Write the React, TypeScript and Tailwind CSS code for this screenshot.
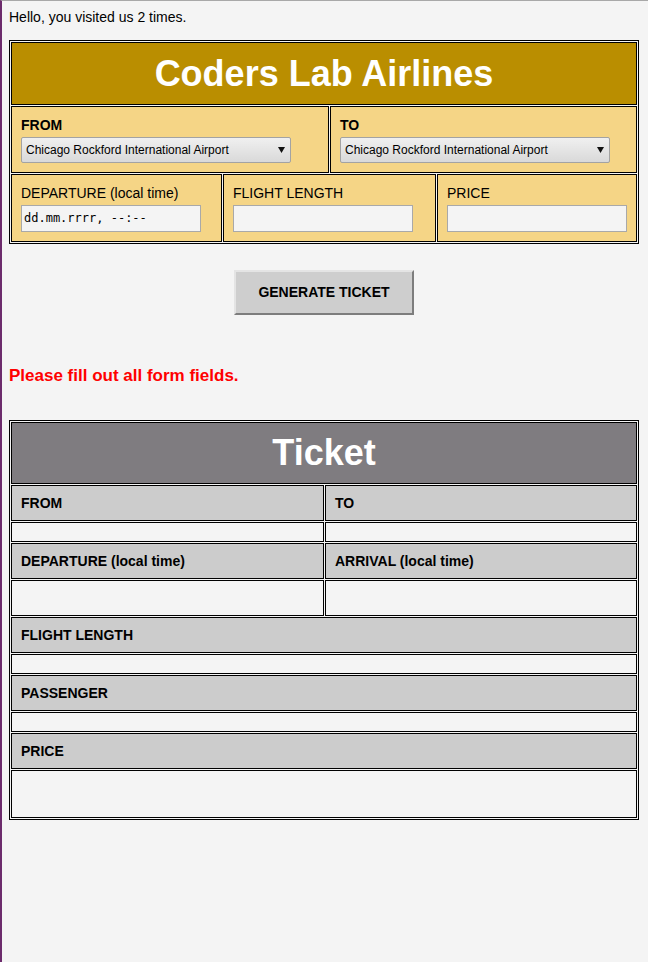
import React from "react";

type Airport = { code: string; name: string };

const airports: Airport[] = [
  { code: "RFD", name: "Chicago Rockford International Airport" },
  { code: "JFK", name: "John F. Kennedy International Airport" },
  { code: "WAW", name: "Warsaw Chopin Airport" },
];

const AirportSelect: React.FC = () => (
  <div className="relative mt-1 w-[270px] h-[26px]">
    <select
      defaultValue="RFD"
      className="appearance-none w-full h-full border border-[#a3a3a3] rounded-[2px] bg-gradient-to-b from-[#f0f0f0] to-[#d9d9d9] pl-[4px] text-[12px] text-black outline-none"
    >
      {airports.map((a) => (
        <option key={a.code} value={a.code}>
          {a.name}
        </option>
      ))}
    </select>
    <svg
      className="absolute right-[6px] top-[10px] pointer-events-none"
      width="7"
      height="6"
      viewBox="0 0 7 6"
    >
      <path d="M0 0h7L3.5 6z" fill="#111" />
    </svg>
  </div>
);

const FieldInput: React.FC<{ value?: string }> = ({ value }) => (
  <input
    type="text"
    defaultValue={value}
    className="mt-1 w-[180px] h-[27px] border border-[#a9a9a9] bg-[#f4f4f4] px-[2px] text-[12px] font-['DejaVu_Sans_Mono',monospace] text-black outline-none"
  />
);

type TicketRow = { cells: string[]; heads: boolean; h: string };

const ticketRows: TicketRow[] = [
  { cells: ["FROM", "TO"], heads: true, h: "h-[36px]" },
  { cells: ["", ""], heads: false, h: "h-[20px]" },
  { cells: ["DEPARTURE (local time)", "ARRIVAL (local time)"], heads: true, h: "h-[36px]" },
  { cells: ["", ""], heads: false, h: "h-[36px]" },
  { cells: ["FLIGHT LENGTH"], heads: true, h: "h-[36px]" },
  { cells: [""], heads: false, h: "h-[20px]" },
  { cells: ["PASSENGER"], heads: true, h: "h-[36px]" },
  { cells: [""], heads: false, h: "h-[20px]" },
  { cells: ["PRICE"], heads: true, h: "h-[36px]" },
  { cells: [""], heads: false, h: "h-[48px]" },
];

export default function App() {
  return (
    <div className="min-h-[962px] bg-[#f4f4f4] border-t border-t-[#a8a8a8] border-l-2 border-l-[#6c2b6c] pl-[7px] pt-[8px] font-['Liberation_Sans',Arial,sans-serif] text-[14px] text-black">
      <p className="leading-4">Hello, you visited us 2 times.</p>

      {/* booking form */}
      <div className="mt-[15px] w-[630px] border border-black p-px flex flex-col gap-px">
        <div className="h-[63px] border border-black bg-[#ba8e00] flex items-center justify-center text-white font-bold text-[36px]">
          Coders Lab Airlines
        </div>
        <div className="flex gap-px h-[67px]">
          <div className="w-[318px] border border-black bg-[#f5d586] pl-[9px] flex flex-col justify-center">
            <span className="font-bold leading-4">FROM</span>
            <AirportSelect />
          </div>
          <div className="flex-1 border border-black bg-[#f5d586] pl-[9px] flex flex-col justify-center">
            <span className="font-bold leading-4">TO</span>
            <AirportSelect />
          </div>
        </div>
        <div className="flex gap-px h-[68px]">
          <div className="w-[211px] border border-black bg-[#f5d586] pl-[9px] flex flex-col justify-center">
            <span className="leading-4">DEPARTURE (local time)</span>
            <FieldInput value="dd.mm.rrrr, --:--" />
          </div>
          <div className="w-[213px] border border-black bg-[#f5d586] pl-[9px] flex flex-col justify-center">
            <span className="leading-4">FLIGHT LENGTH</span>
            <FieldInput />
          </div>
          <div className="flex-1 border border-black bg-[#f5d586] pl-[9px] flex flex-col justify-center">
            <span className="leading-4">PRICE</span>
            <FieldInput />
          </div>
        </div>
      </div>

      <div className="w-[630px] flex justify-center mt-[26px]">
        <button className="w-[180px] h-[45px] bg-[#cecece] border-2 border-t-[#e4e4e4] border-l-[#e4e4e4] border-b-[#7d7d7d] border-r-[#7d7d7d] font-bold text-[14px] text-black">
          GENERATE TICKET
        </button>
      </div>

      <p className="mt-[51px] leading-[20px] text-[17px] font-bold text-[#ff0000]">
        Please fill out all form fields.
      </p>

      {/* ticket */}
      <div className="mt-[34px] w-[630px] border border-black p-px flex flex-col gap-px">
        <div className="h-[62px] border border-black bg-[#7f7c80] flex items-center justify-center text-white font-bold text-[36px]">
          Ticket
        </div>
        {ticketRows.map((row, i) => (
          <div key={i} className={`flex gap-px ${row.h}`}>
            {row.cells.map((c, j) => (
              <div
                key={j}
                className={`${row.cells.length === 2 && j === 0 ? "w-[313px]" : "flex-1"} border border-black pl-[9px] flex items-center font-bold ${row.heads ? "bg-[#cccccc]" : "bg-[#f4f4f4]"}`}
              >
                {c}
              </div>
            ))}
          </div>
        ))}
      </div>
    </div>
  );
}
